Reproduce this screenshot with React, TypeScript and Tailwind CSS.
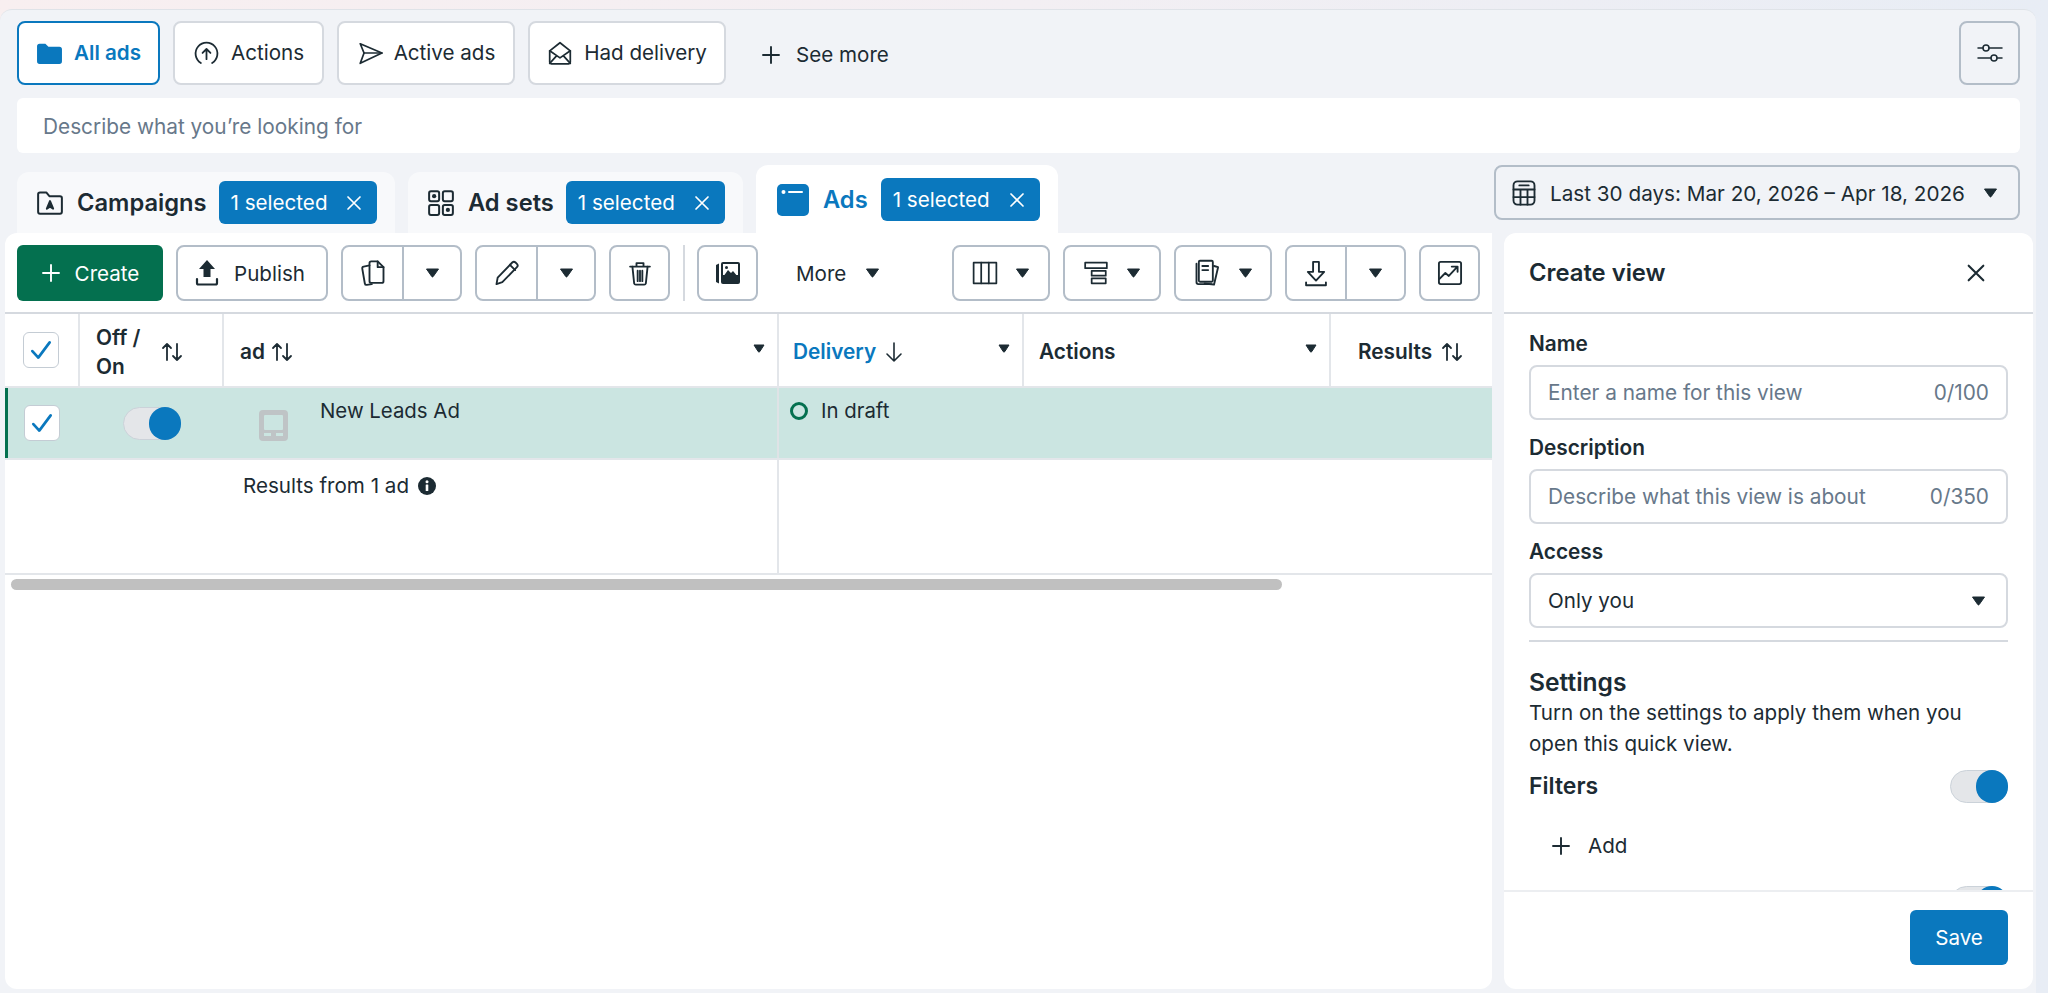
import type { ReactNode } from "react";

const INK = "#1c2b33";

function Icon({ size = 24, children, className = "" }: { size?: number; children: ReactNode; className?: string }) {
  return (
    <svg
      width={size}
      height={size}
      viewBox="0 0 24 24"
      fill="none"
      stroke={INK}
      strokeWidth={1.6}
      strokeLinecap="round"
      strokeLinejoin="round"
      className={`shrink-0 ${className}`}
    >
      {children}
    </svg>
  );
}

function Caret({ color = INK }: { color?: string }) {
  return (
    <svg width="15" height="10" viewBox="0 0 15 10" className="shrink-0">
      <path d="M1.5 1h12l-5.2 7.4a1 1 0 0 1-1.6 0z" fill={color} stroke={color} strokeWidth="1" strokeLinejoin="round" />
    </svg>
  );
}

function SmallCaret() {
  return (
    <svg width="12" height="9" viewBox="0 0 12 9" className="shrink-0">
      <path d="M1 1h10L6.800 7.600a1 1 0 0 1-1.600 0z" fill={INK} stroke={INK} strokeLinejoin="round" />
    </svg>
  );
}

function SortArrows() {
  return (
    <svg width="24" height="24" viewBox="0 0 24 24" fill="none" stroke={INK} strokeWidth="1.8" strokeLinecap="round" strokeLinejoin="round" className="shrink-0">
      <path d="M7 20V4M3 8l4-4 4 4M17 4v16M13 16l4 4 4-4" />
    </svg>
  );
}

function Close({ color = "#ffffff", size = 18 }: { color?: string; size?: number }) {
  return (
    <svg width={size} height={size} viewBox="0 0 18 18" fill="none" stroke={color} strokeWidth="1.7" strokeLinecap="round" className="shrink-0">
      <path d="M3 3l12 12M15 3L3 15" />
    </svg>
  );
}

function Plus({ color = INK, size = 20 }: { color?: string; size?: number }) {
  return (
    <svg width={size} height={size} viewBox="0 0 20 20" fill="none" stroke={color} strokeWidth="1.9" strokeLinecap="round" className="shrink-0">
      <path d="M10 2v16M2 10h16" />
    </svg>
  );
}

function Toggle({ className = "" }: { className?: string }) {
  return (
    <div className={`flex h-[33px] w-[58px] shrink-0 justify-end rounded-full border border-[#cbd2d9] bg-[#e4e6e9] ${className}`}>
      <div className="h-[33px] w-[32px] -mt-px -mr-px rounded-full bg-[#0a78be]" />
    </div>
  );
}

function Checkbox() {
  return (
    <div className="flex h-[36px] w-[36px] items-center justify-center rounded-[6px] border border-[#c4ccd4] bg-white">
      <svg width="26" height="26" viewBox="0 0 24 24" fill="none" stroke="#0a78be" strokeWidth="2.500" strokeLinecap="round" strokeLinejoin="round">
        <path d="M4 13l5.500 6L20 5" />
      </svg>
    </div>
  );
}

function QuickTab({ active, icon, label, width }: { active?: boolean; icon: ReactNode; label: string; width: string }) {
  return (
    <div
      className={`flex h-[64px] items-center justify-center gap-[11px] rounded-[8px] bg-white text-[20.6px] ${width} ${
        active
          ? "border-2 border-[#0a78be] font-semibold text-[#0a78be]"
          : "border-2 border-[#d5d9df] text-[#1c2b33]"
      }`}
    >
      {icon}
      <span>{label}</span>
    </div>
  );
}

function Badge() {
  return (
    <div className="flex h-[43px] w-[159px] items-center justify-between rounded-[6px] bg-[#0a78be] pl-[12px] pr-[14px] text-[20.6px] text-white">
      <span className="whitespace-nowrap pt-px">1 selected</span>
      <Close />
    </div>
  );
}

const toolBtn = "flex h-[56px] items-center justify-center rounded-[8px] border-2 border-[#b3bdc8] bg-white";

function SplitButton({ icon, width, left }: { icon: ReactNode; width: string; left: string }) {
  return (
    <div className={`${toolBtn} ${width}`}>
      <div className={`flex h-full items-center justify-center border-r-2 border-[#b3bdc8] ${left}`}>{icon}</div>
      <div className="flex h-full flex-1 items-center justify-center">
        <Caret />
      </div>
    </div>
  );
}

function DropButton({ icon, width }: { icon: ReactNode; width: string }) {
  return (
    <div className={`${toolBtn} ${width} gap-[17px]`}>
      {icon}
      <Caret />
    </div>
  );
}

function Field({ label, placeholder, counter }: { label: string; placeholder: string; counter: string }) {
  return (
    <div className="flex flex-col">
      <div className="flex h-[30px] items-center text-[20.8px] font-semibold">{label}</div>
      <div className="mt-[6px] flex h-[55px] items-center justify-between rounded-[8px] border-2 border-[#d5d9df] pl-[17px] pr-[17px] text-[20.8px] text-[#67788a]">
        <span>{placeholder}</span>
        <span>{counter}</span>
      </div>
    </div>
  );
}

const tableCols = "grid grid-cols-[75px_144px_555px_245px_307px_1fr]";

export default function App() {
  return (
    <div className="h-[993px] w-[2048px] overflow-hidden bg-gradient-to-r from-[#f8eff0] via-[#f3eff3] to-[#e8edf5] pt-[9px] font-[Inter,sans-serif] text-[#1c2b33]">
      <div className="flex h-[984px] w-[2036px] flex-col rounded-tl-[12px] rounded-tr-[12px] border-t border-[#dfe3e8] bg-[#f1f3f7]">
        {/* Quick views */}
        <div className="mt-[11px] flex h-[64px] items-center pl-[17px] pr-[16px]">
          <div className="flex gap-[13px]">
            <QuickTab
              active
              width="w-[143px]"
              label="All ads"
              icon={
                <svg width="27" height="25" viewBox="0 0 26 24" className="shrink-0">
                  <path d="M1 5a2.500 2.500 0 0 1 2.500-2.500h5.500l3 3h10.500a2.500 2.500 0 0 1 2.500 2.500v11.500a2.500 2.500 0 0 1-2.500 2.500h-19a2.500 2.500 0 0 1-2.500-2.500z" fill="#0a78be" />
                </svg>
              }
            />
            <QuickTab
              width="w-[151px]"
              label="Actions"
              icon={
                <Icon size={27}>
                  <path d="M7 20.400A9.700 9.700 0 1 1 17 20.400" />
                  <path d="M12 17V8M8.500 11.500L12 8l3.500 3.500" />
                </Icon>
              }
            />
            <QuickTab
              width="w-[178px]"
              label="Active ads"
              icon={
                <Icon size={26}>
                  <path d="M3 3.500L23 12 3 21.500 6.500 12z" />
                  <path d="M6.500 12H23" />
                </Icon>
              }
            />
            <QuickTab
              width="w-[198px]"
              label="Had delivery"
              icon={
                <Icon size={26}>
                  <path d="M2.500 10L12 2.500 21.500 10v10.500a1.500 1.500 0 0 1-1.500 1.500H4a1.500 1.500 0 0 1-1.500-1.500z" />
                  <path d="M2.500 10L12 16.500 21.500 10M2.500 21.500L9 14.500M21.500 21.500L15 14.500" />
                </Icon>
              }
            />
          </div>
          <div className="ml-[35px] flex items-center gap-[15px] pt-[4px] text-[20.6px]">
            <Plus />
            <span>See more</span>
          </div>
          <div className="ml-auto flex h-[64px] w-[61px] items-center justify-center rounded-[8px] border-2 border-[#b3bdc8]">
            <svg width="28" height="24" viewBox="0 0 28 24" fill="none" stroke={INK} strokeWidth="1.500" strokeLinecap="round" className="shrink-0">
              <circle cx="10" cy="7" r="3" />
              <path d="M2 7h5M13 7h13M2 17h13M21 17h5" />
              <circle cx="18" cy="17" r="3" />
            </svg>
          </div>
        </div>

        {/* Search */}
        <div className="mx-[17px] mt-[13px] flex h-[55px] w-[2003px] items-center rounded-[6px] bg-white pl-[26px] pt-[2px] text-[20.8px] text-[#67788a]">
          Describe what you’re looking for
        </div>

        {/* Level tabs */}
        <div className="mt-[12px] flex h-[68px] pl-[17px] pr-[16px]">
          <div className="flex items-end gap-[13px]">
            <div className="flex h-[61px] w-[378px] items-start gap-[12px] rounded-t-[12px] bg-[#f8f9fb] pl-[18px] pr-[18px] pt-[9px]">
              <div className="flex h-[43px] items-center gap-[12px] text-[23.7px] font-semibold">
                <Icon size={30}>
                  <path d="M2.500 5a1.500 1.500 0 0 1 1.500-1.500h5l2.500 3H20a1.500 1.500 0 0 1 1.500 1.500v11a1.500 1.500 0 0 1-1.500 1.500H4a1.500 1.500 0 0 1-1.500-1.500z" />
                  <path d="M9.500 16.500L12 10.500l2.500 6-2.500-1.500z" fill={INK} />
                </Icon>
                <span className="whitespace-nowrap pt-px">Campaigns</span>
              </div>
              <Badge />
            </div>
            <div className="flex h-[61px] w-[335px] items-start gap-[12px] rounded-t-[12px] bg-[#f8f9fb] pl-[18px] pr-[17px] pt-[9px]">
              <div className="flex h-[43px] items-center gap-[12px] text-[23.7px] font-semibold">
                <Icon size={30}>
                  <rect x="2.500" y="2.500" width="8" height="8" rx="1.500" />
                  <rect x="13.500" y="2.500" width="8" height="8" rx="1.500" />
                  <rect x="2.500" y="13.500" width="8" height="8" rx="1.500" />
                  <rect x="13.500" y="13.500" width="8" height="8" rx="1.500" />
                  <circle cx="6.500" cy="6.500" r="1.700" fill={INK} stroke="none" />
                  <circle cx="17.500" cy="17.500" r="1.700" fill={INK} stroke="none" />
                </Icon>
                <span className="whitespace-nowrap pt-px">Ad sets</span>
              </div>
              <Badge />
            </div>
            <div className="flex h-[68px] w-[302px] items-start gap-[13px] rounded-t-[12px] bg-white pl-[21px] pt-[13px]">
              <div className="flex h-[43px] items-center gap-[14px] text-[23.7px] font-semibold text-[#0a78be]">
                <svg width="32" height="32" viewBox="0 0 32 32" className="shrink-0">
                  <rect x="0" y="0" width="32" height="32" rx="5" fill="#0a78be" />
                  <circle cx="6.500" cy="8" r="2" fill="#fff" />
                  <rect x="11" y="7" width="15" height="2" rx="1" fill="#fff" />
                </svg>
                <span className="pt-px">Ads</span>
              </div>
              <Badge />
            </div>
          </div>
          <div className="ml-auto flex h-[55px] w-[526px] items-center gap-[12px] rounded-[8px] border-2 border-[#b3bdc8] pl-[14px] pr-[20px] text-[20.7px]">
            <Icon size={28}>
              <rect x="3" y="2" width="18" height="20" rx="3.500" />
              <path d="M3 9h18M3 15.500h18M9 9v13M15 9v13M8 5.500h8" />
            </Icon>
            <span className="whitespace-nowrap pt-[2px]">Last 30 days: Mar 20, 2026 – Apr 18, 2026</span>
            <span className="ml-auto">
              <Caret />
            </span>
          </div>
        </div>

        {/* Panels */}
        <div className="flex h-[756px] gap-[12px] pl-[5px]">
          <div className="flex w-[1487px] flex-col rounded-b-[12px] rounded-tl-[12px] bg-white">
            <div className="flex h-[81px] shrink-0 border-b-2 border-[#d5d9df] pl-[12px] pt-[12px]">
              <div className="flex h-[56px] w-[146px] items-center justify-center gap-[14px] rounded-[6px] bg-[#04704f] text-[20.6px] text-white">
                <Plus color="#ffffff" />
                <span className="pt-[2px]">Create</span>
              </div>
              <div className={`${toolBtn} ml-[13px] w-[152px] gap-[15px] pr-[4px] text-[20.6px]`}>
                <svg width="24" height="28" viewBox="0 0 24 28" className="shrink-0">
                  <path d="M12 1l8 9h-4.500v8h-7v-8H4z" fill={INK} />
                  <path d="M2 20v4a1.500 1.500 0 0 0 1.500 1.500h17A1.500 1.500 0 0 0 22 24v-4" fill="none" stroke={INK} strokeWidth="2.200" strokeLinecap="round" />
                </svg>
                <span className="pt-[2px]">Publish</span>
              </div>
              <SplitButton
                width="ml-[13px] w-[121px]"
                left="w-[61px]"
                icon={
                  <Icon size={28}>
                    <path d="M9 5.500L4 6.500a1.500 1.500 0 0 0-1.200 1.700L5 21a1.500 1.500 0 0 0 1.700 1.200L11 21.500" />
                    <path d="M9 3.500a1.500 1.500 0 0 1 1.500-1.500H16l5 5v12a1.500 1.500 0 0 1-1.500 1.500h-9A1.500 1.500 0 0 1 9 19z" />
                    <path d="M16 2v5h5" />
                  </Icon>
                }
              />
              <SplitButton
                width="ml-[13px] w-[121px]"
                left="w-[61px]"
                icon={
                  <Icon size={28}>
                    <path d="M3 21.500l1-5.500L16.500 3a2 2 0 0 1 2.800 0l1.200 1.200a2 2 0 0 1 0 2.800L8 19.800z" />
                    <path d="M14.500 5l4.500 4.500" />
                  </Icon>
                }
              />
              <div className={`${toolBtn} ml-[13px] w-[61px]`}>
                <Icon size={28}>
                  <path d="M3.500 6.500h17M9 6V3.500h6V6" />
                  <path d="M5.500 6.500L7 21a1.500 1.500 0 0 0 1.500 1h7a1.500 1.500 0 0 0 1.500-1l1.500-14.500" />
                  <path d="M10 10v9M12 10v9M14 10v9" />
                </Icon>
              </div>
              <div className="ml-[13px] h-[56px] w-[2px] bg-[#d5d9df]" />
              <div className={`${toolBtn} ml-[12px] w-[61px]`}>
                <svg width="28" height="28" viewBox="0 0 28 28" className="shrink-0">
                  <path d="M5 4.500L2 6v17l3 1.500z" fill={INK} />
                  <rect x="7" y="3" width="19" height="22" rx="2" fill={INK} />
                  <rect x="9" y="5" width="15" height="11" fill="#fff" />
                  <circle cx="12.500" cy="8.500" r="1.500" fill={INK} />
                  <path d="M9 18l5-7 3 3 2-2 5 6v2H9z" fill={INK} />
                </svg>
              </div>
              <div className="ml-[38px] flex h-[56px] w-[84px] items-center justify-between text-[20.6px]">
                <span className="pt-[2px]">More</span>
                <Caret />
              </div>
              <DropButton
                width="ml-[72px] w-[98px]"
                icon={
                  <Icon size={26}>
                    <rect x="1.500" y="2.500" width="21" height="19" />
                    <path d="M8.500 2.500v19M15.500 2.500v19" />
                  </Icon>
                }
              />
              <DropButton
                width="ml-[13px] w-[98px]"
                icon={
                  <Icon size={26}>
                    <rect x="2" y="2.500" width="20" height="5" />
                    <rect x="8" y="10" width="13" height="4.500" />
                    <rect x="8" y="17" width="13" height="4.500" />
                  </Icon>
                }
              />
              <DropButton
                width="ml-[13px] w-[98px]"
                icon={
                  <Icon size={28}>
                    <rect x="5" y="1.500" width="12" height="18" rx="1" />
                    <path d="M3 4v16a1.500 1.500 0 0 0 1.500 1.500H16M8 6h5M8 9.500h5" />
                    <path d="M18 6l3.500 1-3.500 15-8-1" />
                  </Icon>
                }
              />
              <SplitButton
                width="ml-[13px] w-[121px]"
                left="w-[60px]"
                icon={
                  <Icon size={28}>
                    <path d="M9.500 2.500h5V11H19l-7 7.500L5 11h4.500z" />
                    <path d="M3.500 20v2.500h17V20" />
                  </Icon>
                }
              />
              <div className={`${toolBtn} ml-[13px] w-[61px]`}>
                <Icon size={28}>
                  <rect x="2.500" y="2.500" width="19" height="19" rx="1.500" />
                  <path d="M3 17l5-5 3 2.500L18 7M13.500 6.500H18.500V11" />
                </Icon>
              </div>
            </div>

            {/* Table */}
            <div className={`${tableCols} h-[74px] shrink-0 border-b-2 border-[#e3e6ea] text-[20.8px] font-semibold`}>
              <div className="flex items-center border-r-2 border-[#e3e6ea] pl-[18px]">
                <Checkbox />
              </div>
              <div className="flex items-center border-r-2 border-[#e3e6ea] pl-[16px] pt-[3px]">
                <span className="w-[64px] leading-[29px]">Off / On</span>
                <SortArrows />
              </div>
              <div className="flex items-center border-r-2 border-[#e3e6ea] pl-[16px] pt-[3px]">
                <span className="mr-[5px]">ad</span>
                <SortArrows />
                <span className="ml-auto mb-[6px] mr-[12px]">
                  <SmallCaret />
                </span>
              </div>
              <div className="flex items-center border-r-2 border-[#e3e6ea] pl-[14px] pt-[3px] text-[#0a78be]">
                <span className="mr-[8px]">Delivery</span>
                <svg width="20" height="24" viewBox="0 0 20 24" fill="none" stroke={INK} strokeWidth="1.600" strokeLinecap="round" strokeLinejoin="round">
                  <path d="M10 3v18M3 14l7 7 7-7" />
                </svg>
                <span className="ml-auto mb-[6px] mr-[12px]">
                  <SmallCaret />
                </span>
              </div>
              <div className="flex items-center border-r-2 border-[#e3e6ea] pl-[15px] pt-[3px]">
                <span>Actions</span>
                <span className="ml-auto mb-[6px] mr-[12px]">
                  <SmallCaret />
                </span>
              </div>
              <div className="flex items-center pl-[27px] pt-[3px]">
                <span className="mr-[8px]">Results</span>
                <SortArrows />
              </div>
            </div>
            <div className={`${tableCols} h-[72px] shrink-0 border-b-2 border-[#e3e6ea] bg-[#cbe5e1] text-[20.4px]`}>
              <div className="flex items-center border-l-[3px] border-[#04704f] pl-[16px]">
                <Checkbox />
              </div>
              <div className="flex items-center justify-center">
                <Toggle />
              </div>
              <div className="flex gap-[32px] border-r-2 border-[#dfe3e6] pl-[35px]">
                <svg width="29" height="31" viewBox="0 0 29 31" className="mt-[22px] shrink-0">
                  <rect x="0" y="0" width="29" height="31" rx="4" fill="#bfc4c6" />
                  <rect x="5" y="5" width="19" height="15" rx="1" fill="#cbe5e1" />
                  <rect x="5" y="23" width="7" height="3" fill="#cbe5e1" />
                  <rect x="17" y="23" width="7" height="3" fill="#cbe5e1" />
                </svg>
                <span className="pt-[8px]">New Leads Ad</span>
              </div>
              <div className="flex items-start gap-[13px] pl-[11px] pt-[8px]">
                <span className="mt-[6px] h-[18px] w-[18px] rounded-full border-[3px] border-[#04704f]" />
                <span>In draft</span>
              </div>
            </div>
            <div className={`${tableCols} h-[115px] shrink-0 border-b-2 border-[#e3e6ea] text-[20.6px]`}>
              <div />
              <div />
              <div className="flex items-start gap-[9px] border-r-2 border-[#e3e6ea] pl-[19px] pt-[11px]">
                <span>Results from 1 ad</span>
                <svg width="18" height="18" viewBox="0 0 18 18" className="mt-[6px] shrink-0">
                  <circle cx="9" cy="9" r="9" fill={INK} />
                  <rect x="7.700" y="7.500" width="2.600" height="6.500" rx="0.500" fill="#fff" />
                  <circle cx="9" cy="4.800" r="1.500" fill="#fff" />
                </svg>
              </div>
            </div>
            <div className="ml-[6px] mt-[4px] h-[11px] w-[1271px] rounded-full bg-[#c0c0c0]" />
          </div>

          {/* Create view */}
          <div className="flex w-[529px] flex-col rounded-[12px] bg-white">
            <div className="flex h-[81px] shrink-0 items-center justify-between border-b-2 border-[#d5d9df] pl-[25px] pr-[46px] pt-px text-[23.8px] font-semibold">
              <span>Create view</span>
              <Close color={INK} size={22} />
            </div>
            <div className="flex flex-1 flex-col overflow-hidden pl-[25px] pr-[25px] pt-[15px]">
              <Field label="Name" placeholder="Enter a name for this view" counter="0/100" />
              <div className="mt-[13px]">
                <Field label="Description" placeholder="Describe what this view is about" counter="0/350" />
              </div>
              <div className="mt-[13px] flex h-[30px] items-center text-[20.8px] font-semibold">Access</div>
              <div className="mt-[6px] flex h-[55px] shrink-0 items-center justify-between rounded-[8px] border-2 border-[#d5d9df] pl-[17px] pr-[20px] pt-px text-[20.6px]">
                <span>Only you</span>
                <Caret />
              </div>
              <div className="mt-[12px] h-[2px] shrink-0 bg-[#d5d9df]" />
              <div className="mt-[25px] text-[24.6px] font-semibold leading-[30px]">Settings</div>
              <div className="text-[20.6px] leading-[31px]">
                Turn on the settings to apply them when you open this quick view.
              </div>
              <div className="mt-[11px] flex h-[33px] shrink-0 items-center justify-between text-[23px] font-semibold">
                <span>Filters</span>
                <Toggle />
              </div>
              <div className="mt-[28px] flex items-center gap-[17px] pl-[22px] text-[20.6px]">
                <Plus />
                <span>Add</span>
              </div>
              <div className="mt-[24px] flex justify-end">
                <Toggle />
              </div>
            </div>
            <div className="flex h-[99px] shrink-0 justify-end border-t-2 border-[#eceef1] pr-[25px] pt-[18px]">
              <div className="flex h-[55px] w-[98px] items-center justify-center rounded-[6px] bg-[#0a78be] pt-px text-[20.6px] text-white">
                Save
              </div>
            </div>
          </div>
        </div>
      </div>
    </div>
  );
}
